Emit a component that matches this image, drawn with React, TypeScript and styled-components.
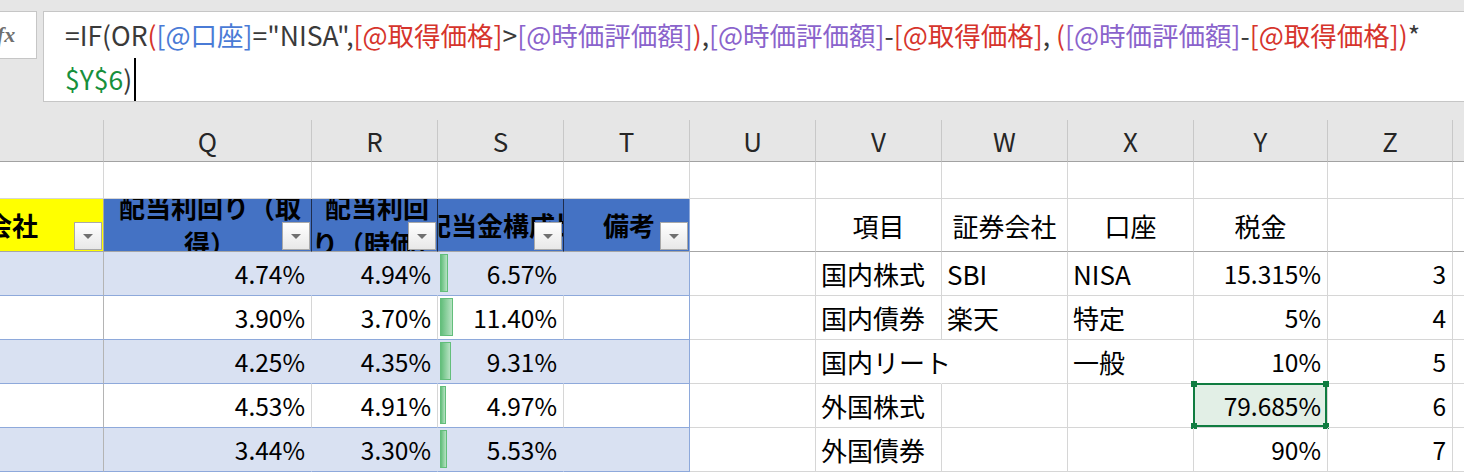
import React from "react";
import styled, { createGlobalStyle } from "styled-components";

const Global = createGlobalStyle`
  html, body { margin: 0; padding: 0; background: #e6e6e6; }
  body {
    width: 1464px; height: 472px; overflow: hidden;
    font-family: "Noto Sans CJK JP", "Noto Sans", sans-serif;
  }
`;

const FONT = `"Noto Sans CJK JP", "Noto Sans", sans-serif`;

const Page = styled.div`
  width: 1464px;
  height: 472px;
  overflow: hidden;
  display: flex;
  flex-direction: column;
  background: #e6e6e6;
`;

const FormulaArea = styled.div`
  display: flex;
  align-items: flex-start;
  gap: 6px;
  height: 120px;
  padding-top: 11px;
  box-sizing: border-box;
  flex: none;
`;

const FxBox = styled.div`
  width: 62px;
  height: 48px;
  margin-left: -25px;
  box-sizing: border-box;
  background: #ffffff;
  border: 1px solid #c6c6c6;
  display: flex;
  align-items: center;
  justify-content: center;
  font-family: "Liberation Serif", "DejaVu Serif", serif;
  font-style: italic;
  font-weight: bold;
  font-size: 22px;
  color: #707070;
`;

const FormulaBox = styled.div`
  flex: 1;
  height: 91px;
  margin-right: -10px;
  box-sizing: border-box;
  background: #ffffff;
  border: 1px solid #c6c6c6;
  padding: 1px 0 0 21px;
  font-family: ${FONT};
  font-size: 26.5px;
  line-height: 44px;
  color: #3a3a3a;
`;

const FormulaLine = styled.div`
  white-space: nowrap;
  display: flex;
  align-items: center;
`;

const Tok = styled.span<{ $c: string }>`
  color: ${(p) => p.$c};
  white-space: pre;
`;

const Caret = styled.span`
  display: inline-block;
  width: 1.5px;
  height: 43px;
  margin-left: 2px;
  background: #000;
`;

const Sheet = styled.div`
  flex: 1;
  background: #ffffff;
  overflow: hidden;
`;

const Grid = styled.div`
  display: grid;
  margin-left: -136px;
  grid-template-columns: 240px 208px repeat(7, 126px) 134px 125px 126px;
  grid-template-rows: 42px 37px 53px repeat(5, 44px);
  font-family: ${FONT};
  color: #000;
`;

const ColHeader = styled.div`
  background: #e6e6e6;
  border-right: 1px solid #c8c8c8;
  border-bottom: 1px solid #a2a2a2;
  box-sizing: border-box;
  display: flex;
  align-items: center;
  justify-content: center;
  font-size: 26px;
  color: #262626;
`;

type Align = "left" | "right" | "center";

const Cell = styled.div<{
  $bg?: string;
  $right?: string;
  $bottom?: string;
  $align?: Align;
  $overflow?: boolean;
}>`
  position: relative;
  box-sizing: border-box;
  min-width: 0;
  display: flex;
  align-items: center;
  justify-content: ${(p) =>
    p.$align === "right" ? "flex-end" : p.$align === "center" ? "center" : "flex-start"};
  padding: ${(p) => (p.$align === "right" ? "0 6px 0 0" : p.$align === "center" ? "0" : "0 0 0 5px")};
  background: ${(p) => p.$bg ?? "transparent"};
  border-right: 1px solid ${(p) => p.$right ?? "#d6d6d6"};
  border-bottom: 1px solid ${(p) => p.$bottom ?? "#d6d6d6"};
  overflow: ${(p) => (p.$overflow ? "visible" : "hidden")};
  white-space: nowrap;
  font-size: 26px;
`;

const NumText = styled.span`
  font-size: 24.5px;
`;

const HeaderText = styled.div`
  display: flex;
  flex-direction: column;
  align-items: center;
  justify-content: center;
  width: 100%;
  height: 100%;
  line-height: 36px;
  font-size: 26px;
  font-weight: 700;
`;

const HeaderLine = styled.span`
  white-space: nowrap;
  flex: none;
`;

const FilterButton = styled.div`
  position: absolute;
  right: 1px;
  bottom: 1px;
  width: 28px;
  height: 28px;
  box-sizing: border-box;
  border: 1px solid #a9a9a9;
  background: linear-gradient(#ffffff, #e8e8e8);
  display: flex;
  align-items: center;
  justify-content: center;
  &::after {
    content: "";
    width: 0;
    height: 0;
    margin-top: 1px;
    border-left: 5px solid transparent;
    border-right: 5px solid transparent;
    border-top: 5px solid #707070;
  }
`;

const DataBar = styled.div`
  flex: none;
  align-self: stretch;
  margin: 2px 0 3px 2px;
  box-sizing: border-box;
  border: 1px solid #63be7b;
  background: linear-gradient(90deg, #63be7b, #b6e2c2);
`;

const Spacer = styled.div`
  flex: 1;
`;

const Selection = styled.div`
  position: absolute;
  left: -1px;
  top: -1px;
  right: 0;
  bottom: 0;
  border: 2px solid #107c41;
  pointer-events: none;
`;

const Handle = styled.div<{ $x: "l" | "r"; $y: "t" | "b" }>`
  position: absolute;
  width: 6px;
  height: 6px;
  background: #107c41;
  ${(p) => (p.$x === "l" ? "left: -4px;" : "right: -4px;")}
  ${(p) => (p.$y === "t" ? "top: -4px;" : "bottom: -4px;")}
`;

const RED = "#d6342c";
const BLUE = "#4a7bd6";
const PURPLE = "#8a63cc";
const GREEN = "#17903c";
const DARK = "#3a3a3a";

const line1: [string, string][] = [
  ["=IF(OR", DARK],
  ["(", RED],
  ["[@口座]", BLUE],
  ['="NISA",', DARK],
  ["[@取得価格]", RED],
  [">", DARK],
  ["[@時価評価額]", PURPLE],
  [")", RED],
  [",", DARK],
  ["[@時価評価額]", PURPLE],
  ["-", DARK],
  ["[@取得価格]", RED],
  [", ", DARK],
  ["(", RED],
  ["[@時価評価額]", PURPLE],
  ["-", DARK],
  ["[@取得価格]", RED],
  [")", RED],
  ["*", DARK],
];

const COLS = ["P", "Q", "R", "S", "T", "U", "V", "W", "X", "Y", "Z", "AA"];

type Row = {
  q: string;
  r: string;
  s: number;
  v: string;
  w: string;
  x: string;
  y: string;
  z: string;
  vOverflow?: boolean;
  selected?: boolean;
};

const rows: Row[] = [
  { q: "4.74%", r: "4.94%", s: 6.57, v: "国内株式", w: "SBI", x: "NISA", y: "15.315%", z: "3" },
  { q: "3.90%", r: "3.70%", s: 11.4, v: "国内債券", w: "楽天", x: "特定", y: "5%", z: "4" },
  { q: "4.25%", r: "4.35%", s: 9.31, v: "国内リート", w: "", x: "一般", y: "10%", z: "5", vOverflow: true },
  { q: "4.53%", r: "4.91%", s: 4.97, v: "外国株式", w: "", x: "", y: "79.685%", z: "6", selected: true },
  { q: "3.44%", r: "3.30%", s: 5.53, v: "外国債券", w: "", x: "", y: "90%", z: "7" },
];

const BAND = "#d9e1f2";
const TBL_LINE = "#8ea9db";
const HEAD_LINE = "#a6a6a6";
const BLUE_HEAD = "#4472c4";
const BLUE_HEAD_LINE = "#1f2d4d";

export default function App() {
  return (
    <Page>
      <Global />
      <FormulaArea>
        <FxBox>fx</FxBox>
        <FormulaBox>
          <FormulaLine>
            {line1.map(([t, c], i) => (
              <Tok key={i} $c={c}>
                {t}
              </Tok>
            ))}
          </FormulaLine>
          <FormulaLine>
            <Tok $c={GREEN}>$Y$6</Tok>
            <Tok $c={DARK}>)</Tok>
            <Caret />
          </FormulaLine>
        </FormulaBox>
      </FormulaArea>
      <Sheet>
        <Grid>
          {COLS.map((c) => (
            <ColHeader key={c}>{c}</ColHeader>
          ))}

          {COLS.map((c) => (
            <Cell key={"r1" + c} />
          ))}

          <Cell $bg="#ffff00" $right="#a6a6a6" $bottom={HEAD_LINE}>
            <HeaderText>
              <HeaderLine>証券会社</HeaderLine>
            </HeaderText>
            <FilterButton />
          </Cell>
          <Cell $bg={BLUE_HEAD} $right={BLUE_HEAD_LINE} $bottom={HEAD_LINE}>
            <HeaderText>
              <HeaderLine>配当利回り（取</HeaderLine>
              <HeaderLine>得）</HeaderLine>
            </HeaderText>
            <FilterButton />
          </Cell>
          <Cell $bg={BLUE_HEAD} $right={BLUE_HEAD_LINE} $bottom={HEAD_LINE}>
            <HeaderText>
              <HeaderLine>配当利回</HeaderLine>
              <HeaderLine>り（時価）</HeaderLine>
            </HeaderText>
            <FilterButton />
          </Cell>
          <Cell $bg={BLUE_HEAD} $right={BLUE_HEAD_LINE} $bottom={HEAD_LINE}>
            <HeaderText>
              <HeaderLine>配当金構成比</HeaderLine>
            </HeaderText>
            <FilterButton />
          </Cell>
          <Cell $bg={BLUE_HEAD} $right={TBL_LINE} $bottom={HEAD_LINE}>
            <HeaderText>
              <HeaderLine>備考</HeaderLine>
            </HeaderText>
            <FilterButton />
          </Cell>
          <Cell $bottom={HEAD_LINE} />
          <Cell $bottom={HEAD_LINE} $align="center">項目</Cell>
          <Cell $bottom={HEAD_LINE} $align="center">証券会社</Cell>
          <Cell $bottom={HEAD_LINE} $align="center">口座</Cell>
          <Cell $bottom={HEAD_LINE} $align="center">税金</Cell>
          <Cell $bottom={HEAD_LINE} />
          <Cell $bottom={HEAD_LINE} />

          {rows.map((row, i) => {
            const band = i % 2 === 0;
            const bg = band ? BAND : "#ffffff";
            const inner = band ? BAND : "#d6d6d6";
            return (
              <React.Fragment key={i}>
                <Cell $bg={bg} $right="#b4b4b4" $bottom={TBL_LINE} />
                <Cell $bg={bg} $right={inner} $bottom={TBL_LINE} $align="right">
                  <NumText>{row.q}</NumText>
                </Cell>
                <Cell $bg={bg} $right={inner} $bottom={TBL_LINE} $align="right">
                  <NumText>{row.r}</NumText>
                </Cell>
                <Cell $bg={bg} $right={inner} $bottom={TBL_LINE} $align="right">
                  <DataBar style={{ width: `${Math.round(row.s * 1.18)}px` }} />
                  <Spacer />
                  <NumText>{row.s.toFixed(2)}%</NumText>
                </Cell>
                <Cell $bg={bg} $right={TBL_LINE} $bottom={TBL_LINE} />
                <Cell />
                <Cell $overflow={row.vOverflow} $right={row.vOverflow ? "transparent" : undefined}>
                  {row.v}
                </Cell>
                <Cell>{row.w}</Cell>
                <Cell>{row.x}</Cell>
                <Cell $align="right" $bg={row.selected ? "#e2efe6" : undefined} $overflow={row.selected}>
                  <NumText>{row.y}</NumText>
                  {row.selected && (
                    <Selection>
                      <Handle $x="l" $y="t" />
                      <Handle $x="r" $y="t" />
                      <Handle $x="l" $y="b" />
                      <Handle $x="r" $y="b" />
                    </Selection>
                  )}
                </Cell>
                <Cell $align="right">
                  <NumText>{row.z}</NumText>
                </Cell>
                <Cell />
              </React.Fragment>
            );
          })}
        </Grid>
      </Sheet>
    </Page>
  );
}
